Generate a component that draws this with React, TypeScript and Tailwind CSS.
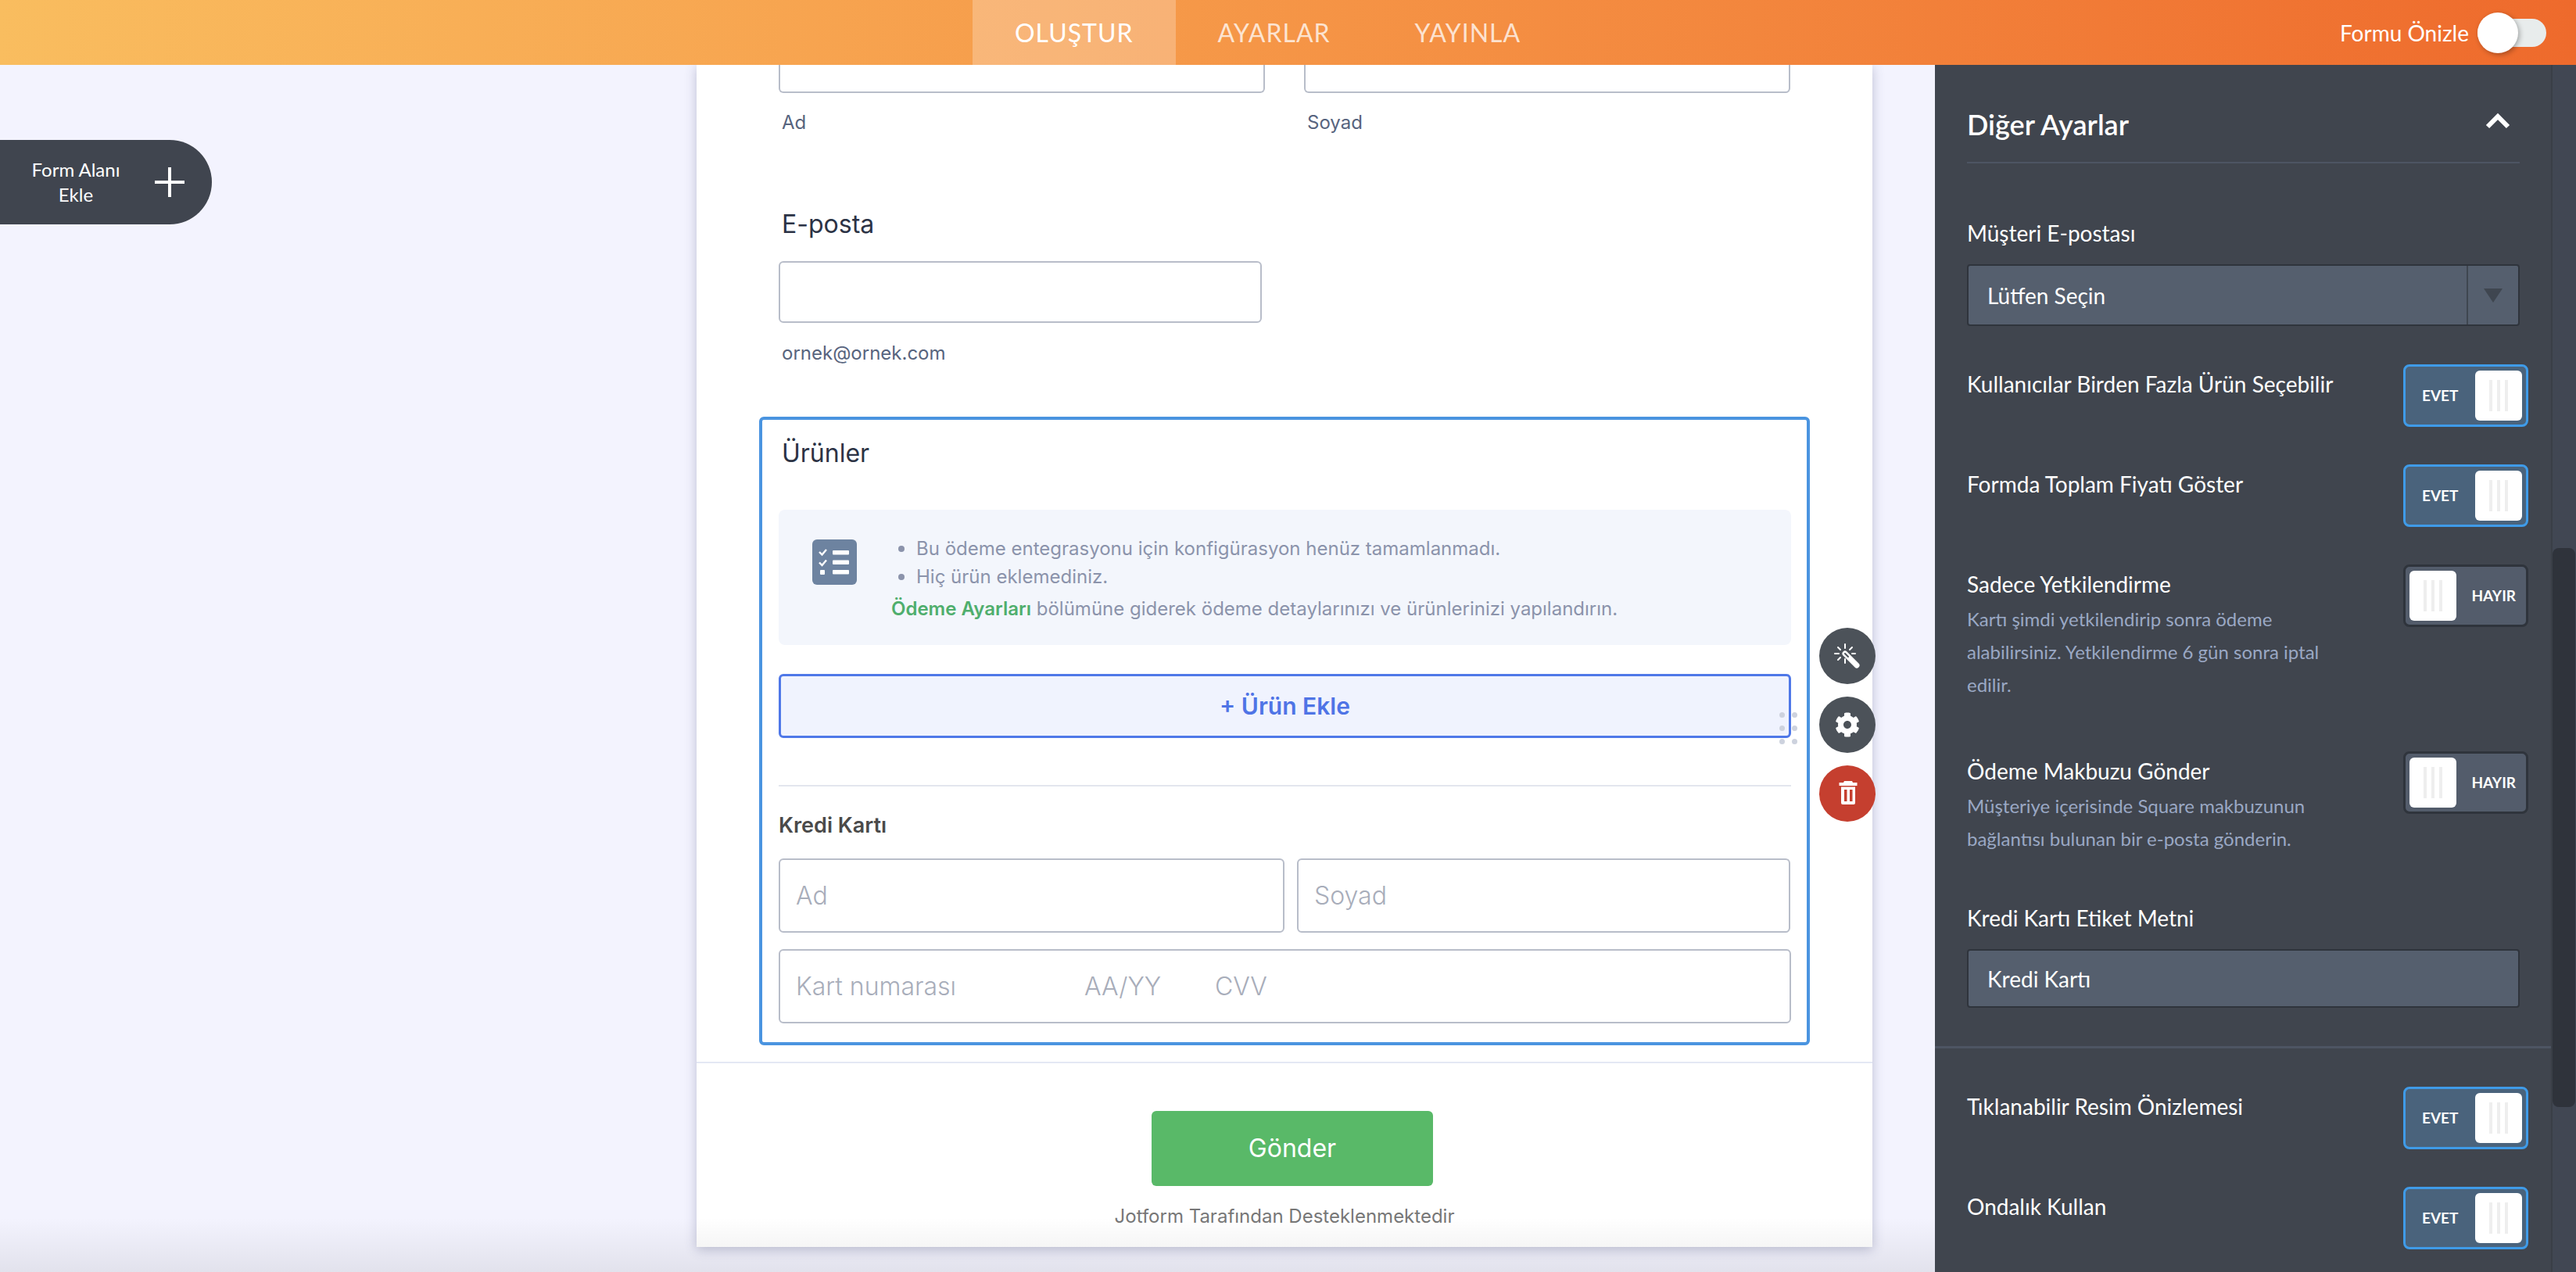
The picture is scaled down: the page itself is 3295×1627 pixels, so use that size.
import { FaCog } from "react-icons/fa";

function Toggle({ on }: { on: boolean }) {
  const grip = (
    <div className="flex h-[64px] w-[60px] items-center justify-center gap-[6px] rounded-[6px] bg-white">
      <div className="h-[40px] w-[4px] bg-[#eeeeee]" />
      <div className="h-[40px] w-[4px] bg-[#eeeeee]" />
      <div className="h-[40px] w-[4px] bg-[#eeeeee]" />
    </div>
  );
  if (on) {
    return (
      <div className="-mr-[11px] flex h-[80px] w-[160px] shrink-0 items-center justify-between rounded-[8px] border-[3px] border-[#3f9be8] bg-[#4a637c] pl-[21px] pr-[5px]">
        <span className="text-[19px] font-bold text-white">EVET</span>
        {grip}
      </div>
    );
  }
  return (
    <div className="-mr-[11px] flex h-[80px] w-[160px] shrink-0 items-center justify-between rounded-[8px] border-[3px] border-[#2f343c] bg-[#535c6b] pl-[5px] pr-[13px]">
      {grip}
      <span className="text-[19px] font-bold text-white">HAYIR</span>
    </div>
  );
}

function SettingRow({ label, desc, on, className }: { label: string; desc?: string[]; on: boolean; className: string }) {
  return (
    <div className={`flex items-start justify-between ${className}`}>
      <div className="pt-[7px]">
        <div className="text-[28px] leading-[36px] text-white">{label}</div>
        {desc && (
          <div className="mt-[6px] text-[24px] leading-[42px] text-[#9aa8c4]">
            {desc.map((line) => (
              <div key={line}>{line}</div>
            ))}
          </div>
        )}
      </div>
      <Toggle on={on} />
    </div>
  );
}

function ChecklistIcon() {
  return (
    <svg width="57" height="58" viewBox="0 0 57 58" className="shrink-0">
      <rect width="57" height="58" rx="6" fill="#6d83a0" />
      <path d="M9 16l3.5 3.5L18 13M9 29.5l3.5 3.5L18 26.5" fill="none" stroke="#fff" strokeWidth="2.4" />
      <rect x="10" y="39" width="6" height="6" rx="1" fill="#fff" />
      <rect x="26" y="14" width="21" height="5.5" rx="1" fill="#fff" />
      <rect x="26" y="26.5" width="21" height="5.5" rx="1" fill="#fff" />
      <rect x="26" y="39" width="21" height="5.5" rx="1" fill="#fff" />
    </svg>
  );
}

function WandIcon() {
  return (
    <svg width="72" height="72" viewBox="0 0 72 72">
      <path d="M33 33L48 48" stroke="#fff" strokeWidth="7" strokeLinecap="round" />
      <path d="M33 33L37 37" stroke="#4c5259" strokeWidth="2" strokeLinecap="round" />
      <path d="M33 21v5M33 40v5M20 33h5M42 33h4M24 25l3 3M42 25l-3 3M24 41l3-3" stroke="#fff" strokeWidth="2" strokeLinecap="round" />
    </svg>
  );
}

function TrashIcon() {
  return (
    <svg width="72" height="72" viewBox="0 0 72 72">
      <path d="M31 22l1-2h10l1 2h5.5v4h-23v-4z" fill="#fff" />
      <path d="M28 27.500h18V48a2 2 0 0 1-2 2H30a2 2 0 0 1-2-2z" fill="#fff" />
      <rect x="32" y="31" width="3.500" height="15" fill="#c53f2f" />
      <rect x="39" y="31" width="3.500" height="15" fill="#c53f2f" />
    </svg>
  );
}

export default function App() {
  return (
    <div className="relative flex h-[1627px] w-[3295px] flex-col overflow-hidden bg-[#f3f3fe] font-['Inter',sans-serif]">
      {/* top bar */}
      <header className="relative z-20 flex h-[83px] shrink-0 items-stretch bg-linear-to-r from-[#f9bd5f] to-[#ee6a2c] pl-[1244px] font-['Lato',sans-serif] text-[32px] tracking-[1px]">
        <div className="flex items-center bg-white/25 px-[54px] text-white">OLUŞTUR</div>
        <div className="flex items-center px-[54px] text-white/75">AYARLAR</div>
        <div className="flex items-center px-[54px] text-white/75">YAYINLA</div>
        <div className="absolute right-[38px] top-0 flex h-[83px] items-center">
          <span className="mr-[11px] text-[28px] tracking-normal text-white">Formu Önizle</span>
          <div className="relative h-[36px] w-[88px] rounded-full bg-[#e8ecec]">
            <div className="absolute -top-[8px] left-0 h-[52px] w-[52px] rounded-full bg-white shadow-[2px_2px_6px_rgba(0,0,0,0.3)]" />
          </div>
        </div>
      </header>

      <div className="flex min-h-0 flex-1">
        {/* left rail */}
        <div className="w-[891px] shrink-0 pt-[96px]">
          <div className="flex h-[108px] w-[271px] items-center rounded-r-[54px] bg-[#40454f] font-['Lato',sans-serif] text-white">
            <div className="w-[194px] text-center text-[24px] leading-[32px]">
              Form Alanı
              <br />
              Ekle
            </div>
            <svg width="38" height="38" viewBox="0 0 38 38" className="ml-[4px]">
              <path d="M19 0v38M0 19h38" stroke="#fff" strokeWidth="4" strokeLinecap="round" />
            </svg>
          </div>
        </div>

        {/* form card */}
        <main className="h-[1512px] w-[1504px] shrink-0 bg-white shadow-[0_3px_14px_rgba(60,65,110,0.3)]">
          <div className="ml-[105px] flex gap-[50px]">
            <div className="h-[36px] w-[622px] rounded-b-[6px] border-2 border-t-0 border-[#b8bdc9]" />
            <div className="h-[36px] w-[622px] rounded-b-[6px] border-2 border-t-0 border-[#b8bdc9]" />
          </div>
          <div className="ml-[109px] mt-[23px] flex gap-[50px] text-[24px] leading-[30px] text-[#57647e]">
            <div className="w-[622px]">Ad</div>
            <div>Soyad</div>
          </div>
          <div className="ml-[109px] mt-[95px] text-[32px] leading-[40px] text-[#2c3345]">E-posta</div>
          <div className="ml-[105px] mt-[27px] h-[79px] w-[618px] rounded-[6px] border-2 border-[#b8bdc9]" />
          <div className="ml-[109px] mt-[24px] text-[24px] leading-[30px] text-[#57647e]">ornek@ornek.com</div>

          {/* products */}
          <section className="relative ml-[80px] mt-[66px] w-[1344px] rounded-[6px] border-[4px] border-[#4a94e0] pb-[24px] pl-[21px] pr-[20px] pt-[23px]">
            <div className="ml-[4px] text-[32px] leading-[40px] text-[#2c3345]">Ürünler</div>
            <div className="mt-[52px] flex h-[173px] rounded-[8px] bg-[#f3f6fc] pl-[43px] pt-[32px] text-[24px] leading-[36px] text-[#8b93ab]">
              <div className="mt-[6px]">
                <ChecklistIcon />
              </div>
              <div className="ml-[44px]">
                <div className="ml-[9px] flex items-center gap-[15px]">
                  <span className="h-[8px] w-[8px] rounded-full bg-[#8b93ab]" />
                  Bu ödeme entegrasyonu için konfigürasyon henüz tamamlanmadı.
                </div>
                <div className="ml-[9px] flex items-center gap-[15px]">
                  <span className="h-[8px] w-[8px] rounded-full bg-[#8b93ab]" />
                  Hiç ürün eklemediniz.
                </div>
                <div className="mt-[5px]">
                  <span className="font-semibold text-[#4fae6d]">Ödeme Ayarları</span> bölümüne giderek ödeme detaylarınızı ve ürünlerinizi yapılandırın.
                </div>
              </div>
            </div>
            <div className="relative mt-[37px] flex h-[82px] items-center justify-center rounded-[6px] border-[3px] border-[#4f78e8] bg-[#f0f3fe] text-[30px] font-semibold text-[#4f74e6]">
              + Ürün Ekle
              <div className="absolute -bottom-[11px] -right-[11px] grid grid-cols-2 gap-x-[9px] gap-y-[10px]">
                {[0, 1, 2, 3, 4, 5].map((d) => (
                  <span key={d} className="h-[7px] w-[7px] rounded-full bg-[#cdd2de]" />
                ))}
              </div>
            </div>
            <div className="mt-[60px] h-[2px] bg-[#e3e6ee]" />
            <div className="mt-[32px] text-[27px] font-semibold leading-[36px] text-[#4a4a4a]">Kredi Kartı</div>
            <div className="mt-[24px] flex gap-[16px]">
              <div className="flex h-[95px] w-[647px] items-center rounded-[6px] border-2 border-[#b8bdc9] pl-[20px] text-[32px] font-light text-[#a8adba]">Ad</div>
              <div className="flex h-[95px] w-[631px] items-center rounded-[6px] border-2 border-[#b8bdc9] pl-[20px] text-[32px] font-light text-[#a8adba]">Soyad</div>
            </div>
            <div className="mt-[21px] flex h-[95px] items-center rounded-[6px] border-2 border-[#b8bdc9] pl-[20px] text-[32px] font-light text-[#a8adba]">
              <span className="w-[369px]">Kart numarası</span>
              <span className="w-[167px]">AA/YY</span>
              <span>CVV</span>
            </div>

            {/* floating actions */}
            <div className="absolute -right-[88px] top-[266px] flex flex-col gap-[16px]">
              <div className="h-[72px] w-[72px] rounded-full bg-[#4c5259]">
                <WandIcon />
              </div>
              <div className="flex h-[72px] w-[72px] items-center justify-center rounded-full bg-[#4c5259] text-[32px] text-white">
                <FaCog />
              </div>
              <div className="h-[72px] w-[72px] rounded-full bg-[#c53f2f]">
                <TrashIcon />
              </div>
            </div>
          </section>

          <div className="mt-[21px] h-[2px] bg-[#e4e8f4]" />
          <div className="ml-[582px] mt-[61px] flex h-[96px] w-[360px] items-center justify-center rounded-[6px] bg-[#59b968] text-[32px] text-white">Gönder</div>
          <div className="mt-[24px] text-center text-[24px] leading-[30px] text-[#777777]">Jotform Tarafından Desteklenmektedir</div>
        </main>

        <div className="w-[80px] shrink-0" />

        {/* settings panel */}
        <aside className="flex w-[820px] shrink-0 bg-[#40454e] font-['Lato',sans-serif]">
          <div className="w-[788px]">
            <div className="pl-[41px] pr-[40px] pt-[51px]">
              <div className="flex h-[50px] items-center justify-between">
                <h2 className="text-[36px] font-semibold text-white">Diğer Ayarlar</h2>
                <svg width="32" height="22" viewBox="0 0 32 22" className="mr-[12px] mb-[8px]">
                  <path d="M3 18L16 5l13 13" fill="none" stroke="#fff" strokeWidth="6" />
                </svg>
              </div>
              <div className="mt-[23px] h-[2px] bg-[#4d5563]" />

              <div className="mt-[71px] text-[28px] leading-[36px] text-white">Müşteri E-postası</div>
              <div className="mt-[22px] flex h-[79px] items-stretch rounded-[4px] border-2 border-[#2f343c] bg-[#555f6e] text-[28px] text-white">
                <div className="flex flex-1 items-center pl-[24px]">Lütfen Seçin</div>
                <div className="flex w-[66px] items-center justify-center border-l-2 border-[#3f4650]">
                  <svg width="24" height="18" viewBox="0 0 24 18">
                    <path d="M0 0h24L12 18z" fill="#3f4650" />
                  </svg>
                </div>
              </div>

              <SettingRow className="mt-[49px]" label="Kullanıcılar Birden Fazla Ürün Seçebilir" on />
              <SettingRow className="mt-[48px]" label="Formda Toplam Fiyatı Göster" on />
              <SettingRow
                className="mt-[48px]"
                label="Sadece Yetkilendirme"
                desc={["Kartı şimdi yetkilendirip sonra ödeme", "alabilirsiniz. Yetkilendirme 6 gün sonra iptal", "edilir."]}
                on={false}
              />
              <SettingRow
                className="mt-[64px]"
                label="Ödeme Makbuzu Gönder"
                desc={["Müşteriye içerisinde Square makbuzunun", "bağlantısı bulunan bir e-posta gönderin."]}
                on={false}
              />

              <div className="mt-[62px] text-[28px] leading-[36px] text-white">Kredi Kartı Etiket Metni</div>
              <div className="mt-[22px] flex h-[75px] items-center rounded-[4px] border-2 border-[#2f343c] bg-[#555f6e] pl-[24px] text-[28px] text-white">Kredi Kartı</div>
            </div>

            <div className="mt-[49px] h-[3px] bg-[#4d5563]" />

            <div className="pl-[41px] pr-[40px]">
              <SettingRow className="mt-[49px]" label="Tıklanabilir Resim Önizlemesi" on />
              <SettingRow className="mt-[48px]" label="Ondalık Kullan" on />
            </div>
          </div>

          {/* scrollbar */}
          <div className="w-[32px] border-l-2 border-[#3a3f47] bg-[#414753] pt-[618px]">
            <div className="h-[715px] w-[29px] rounded-[8px] bg-[#2f333b]" />
          </div>
        </aside>
      </div>

      <div className="pointer-events-none absolute bottom-0 left-0 h-[70px] w-[2475px] bg-linear-to-b from-transparent to-black/[0.07]" />
    </div>
  );
}
